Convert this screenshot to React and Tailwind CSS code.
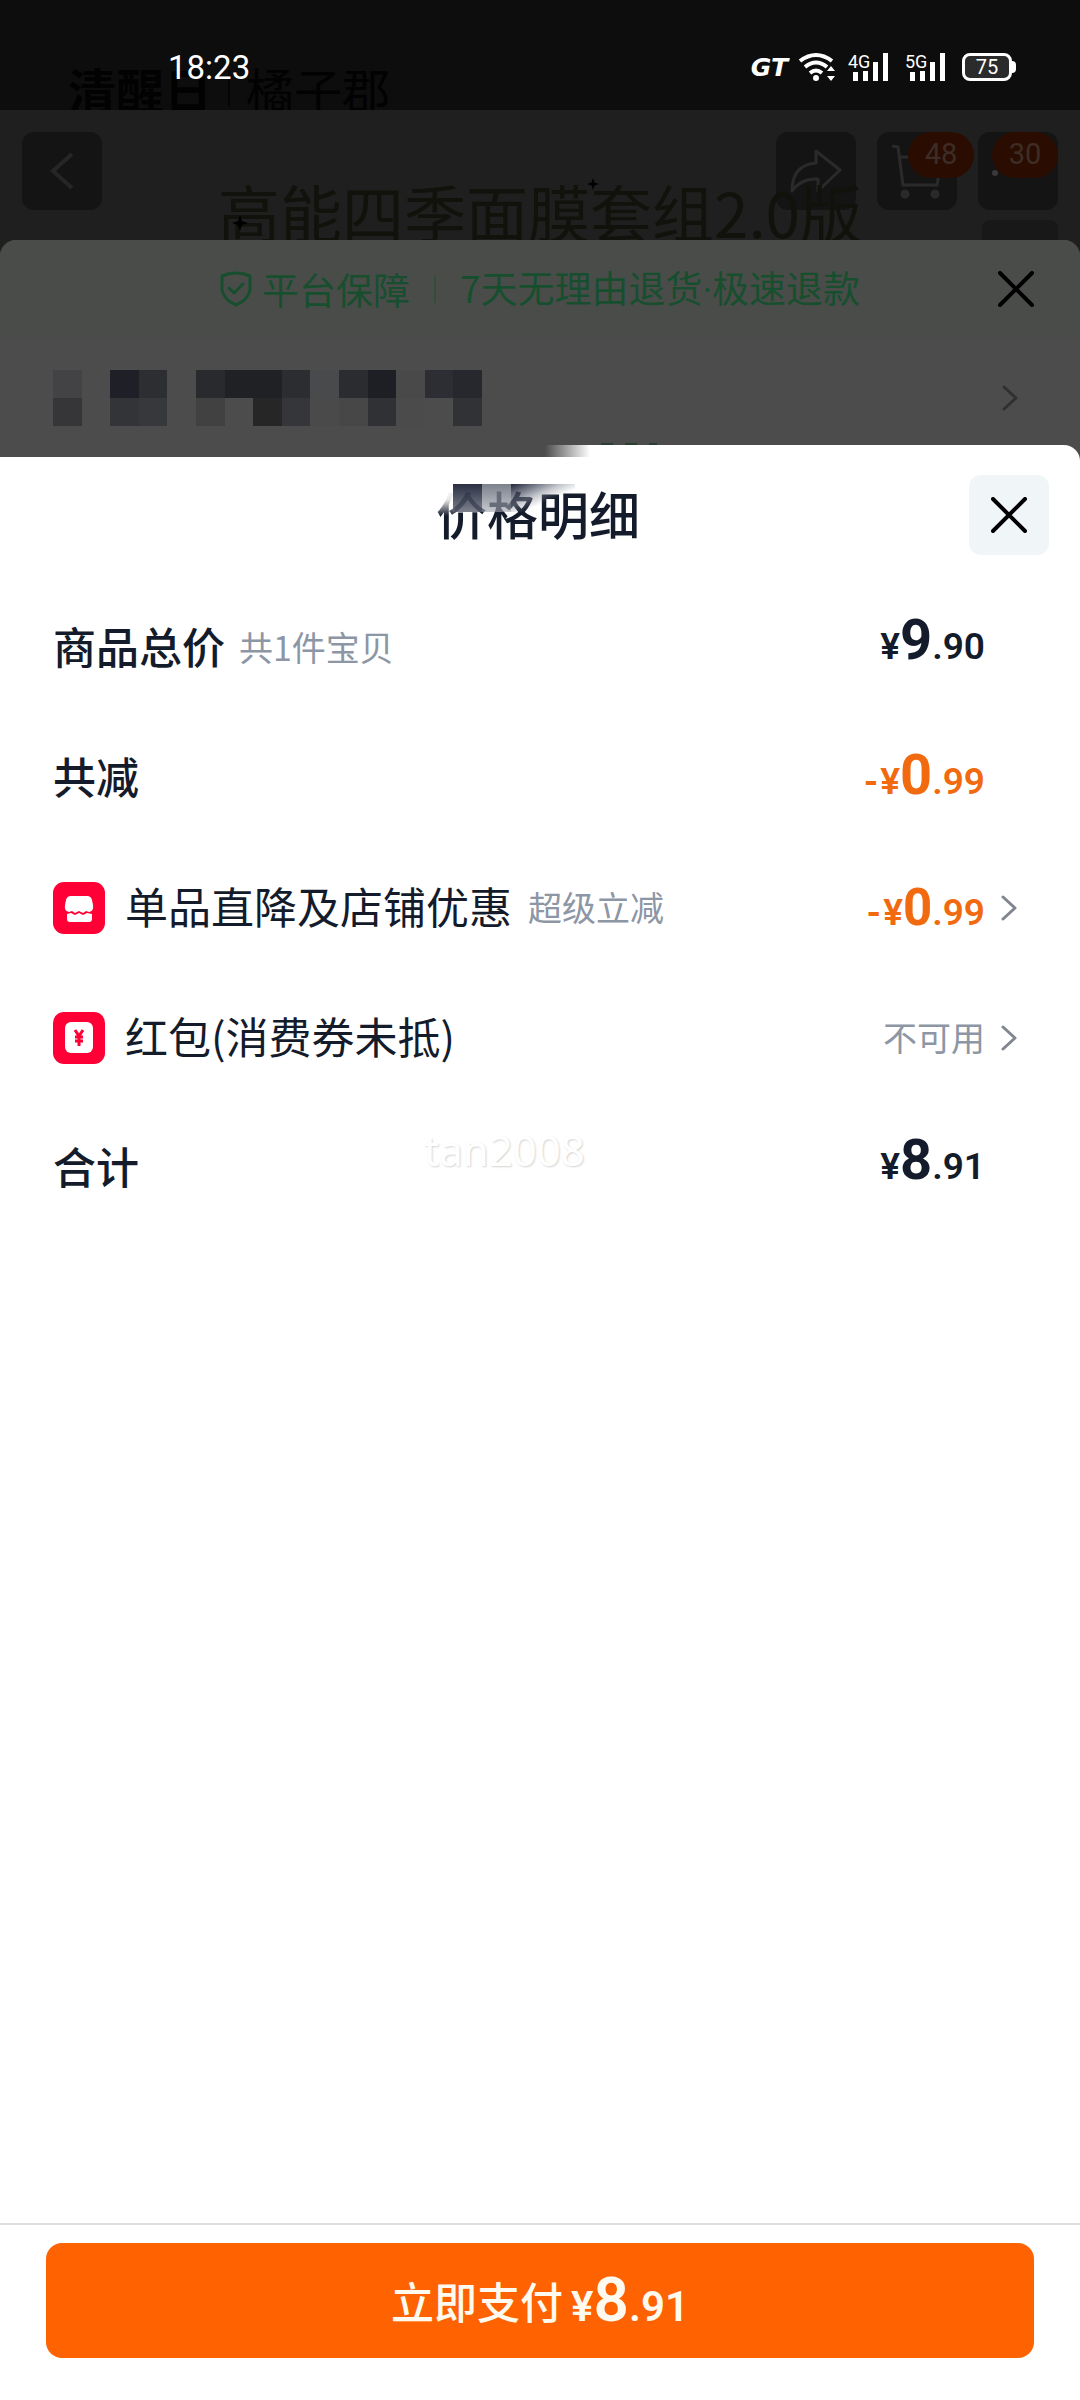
import React from "react";

const MOSAIC = [
  "bg-[#434345]", "", "bg-[#1f2027]", "bg-[#2d2e32]", "", "bg-[#292a2e]", "bg-[#202125]", "bg-[#202125]", "bg-[#2b2d31]", "bg-[#494a4c]", "bg-[#2b2c30]", "bg-[#1e1f24]", "bg-[#494949]", "bg-[#2d2e33]", "bg-[#27282d]",
  "bg-[#363638]", "", "bg-[#323437]", "bg-[#36383b]", "", "bg-[#414141]", "", "bg-[#262627]", "bg-[#34363a]", "bg-[#4a4a4a]", "bg-[#474748]", "bg-[#303135]", "bg-[#4b4b4b]", "", "bg-[#313236]",
];

function Cross({ className }) {
  return (
    <svg viewBox="0 0 36 36" className={className} fill="none" stroke="currentColor" strokeWidth="4" strokeLinecap="round" aria-hidden="true">
      <path d="M2 2 34 34M34 2 2 34" />
    </svg>
  );
}

function Chevron({ className }) {
  return (
    <svg viewBox="0 0 16 26" className={className} fill="none" stroke="currentColor" strokeWidth="3" strokeLinecap="round" strokeLinejoin="round" aria-hidden="true">
      <path d="M2 2 14 13 2 24" />
    </svg>
  );
}

function Signal({ label }) {
  return (
    <div className="relative h-7 w-[41px]">
      <span className="absolute top-0 left-0 font-[Roboto] text-[18px] leading-none">{label}</span>
      <svg viewBox="0 0 36 28" className="absolute right-0 bottom-0 h-7 w-9" fill="currentColor" aria-hidden="true">
        <rect x="0" y="19" width="5" height="9" />
        <rect x="10" y="18" width="5" height="10" />
        <rect x="20" y="9" width="5" height="19" />
        <rect x="30" y="0" width="5" height="28" />
      </svg>
    </div>
  );
}

function StatusBar() {
  return (
    <header className="relative flex h-[110px] items-center justify-between overflow-hidden bg-[#0d0d0d] pr-16 pl-[168px] text-white">
      <div aria-hidden="true" className="absolute top-[64px] left-[68px] flex items-center gap-4 text-[48px] leading-none whitespace-nowrap text-[#020202]">
        <span className="font-bold">清醒日</span>
        <span className="h-9 w-0.5 bg-[#050505]" />
        <span>橘子郡</span>
      </div>
      <time className="relative mt-6 font-[Roboto] text-[33px] leading-none">18:23</time>
      <div className="relative mt-6 flex items-center">
        <span className="mr-2.5 font-['DejaVu_Sans'] text-[25px] leading-none font-bold italic">GT</span>
        <svg viewBox="0 0 38 30" className="mr-3 h-[30px] w-[38px]" fill="none" stroke="currentColor" strokeWidth="4" aria-hidden="true">
          <path d="M2 9Q18-3 34 9" />
          <path d="M7 15Q18 6 29 15" />
          <path d="M12 21Q18 16 24 21" />
          <circle cx="18" cy="26" r="3" fill="currentColor" stroke="none" />
          <path d="M33 14 37 19H29ZM33 29 37 24H29Z" fill="currentColor" stroke="none" />
        </svg>
        <div className="flex gap-4">
          <Signal label="4G" />
          <Signal label="5G" />
        </div>
        <div className="ml-4 flex h-7 w-[50px] items-center justify-center rounded-lg border-[3px] border-white bg-[#2b2b2b] font-[Roboto] text-[20px] leading-none">75</div>
        <span className="h-3 w-1 rounded-r bg-white" />
      </div>
    </header>
  );
}

function NavBar() {
  return (
    <nav className="relative flex h-[130px] items-start justify-between overflow-hidden bg-[#1f1f1f] px-[22px] pt-[22px]">
      <button aria-label="返回" className="flex h-[78px] w-20 items-center justify-center rounded-xl bg-[#141414] text-[#262626]">
        <svg viewBox="0 0 24 38" className="h-[38px] w-6" fill="none" stroke="currentColor" strokeWidth="4" aria-hidden="true">
          <path d="M22 2 3 19 22 36" />
        </svg>
      </button>
      <div className="flex gap-[21px]">
        <button aria-label="分享" className="flex h-[78px] w-20 items-center justify-center rounded-xl bg-[#141414] text-[#2a2a2a]">
          <svg viewBox="0 0 52 44" className="h-11 w-[52px]" fill="none" stroke="currentColor" strokeWidth="3" strokeLinejoin="round" aria-hidden="true">
            <path d="M26 2 50 21 28 42V30Q11 29 2 42Q2 16 26 14Z" />
          </svg>
        </button>
        <button aria-label="购物车 48" className="relative flex h-[78px] w-20 items-center justify-center rounded-xl bg-[#141414] text-[#2a2a2a]">
          <svg viewBox="0 0 52 56" className="h-14 w-[52px]" fill="none" stroke="currentColor" strokeWidth="3" aria-hidden="true">
            <path d="M1 3 7 4 12 42H46L51 14H9" />
            <circle cx="14" cy="51" r="3" fill="currentColor" />
            <circle cx="44" cy="51" r="3" fill="currentColor" />
          </svg>
          <span className="absolute top-0 left-[31px] flex h-[46px] w-[66px] items-center justify-center rounded-full bg-[#2a0c00] font-[Roboto] text-[29px] text-[#3d2d26]">48</span>
        </button>
        <button aria-label="更多 30" className="relative h-[78px] w-20 rounded-xl bg-[#141414]">
          <span className="absolute top-[38px] left-3.5 h-1.5 w-1.5 rounded-full bg-[#3a3a3a]" />
          <span className="absolute top-0 right-0 flex h-[46px] w-[66px] items-center justify-center rounded-full bg-[#2a0c00] font-[Roboto] text-[29px] text-[#3d2d26]">30</span>
        </button>
      </div>
      <span aria-hidden="true" className="absolute top-[110px] right-[22px] h-16 w-[76px] rounded-lg bg-[#181818]" />
      <div aria-hidden="true" className="absolute inset-x-0 top-[70px] text-center text-[62px] leading-none whitespace-nowrap text-[#11120b]">高能四季面膜套组2.0版</div>
      <svg aria-hidden="true" viewBox="0 0 16 16" className="absolute top-[105px] left-[232px] h-4 w-4 fill-black"><path d="M8 0 10 6 16 8 10 10 8 16 6 10 0 8 6 6Z" /></svg>
      <svg aria-hidden="true" viewBox="0 0 16 16" className="absolute top-[68px] left-[587px] h-3 w-3 fill-black"><path d="M8 0 10 6 16 8 10 10 8 16 6 10 0 8 6 6Z" /></svg>
    </nav>
  );
}

function OrderSheet() {
  return (
    <div className="bg-[#1f1f1f]">
      <section className="relative overflow-hidden rounded-t-2xl bg-[#4c4c4c]">
        <div className="flex h-[98px] items-center justify-center bg-[#4a4c4a] text-[37px] leading-none text-[#174f2e]">
          <svg viewBox="0 0 32 36" className="mr-2.5 h-9 w-8" fill="none" stroke="currentColor" strokeWidth="3" strokeLinecap="round" strokeLinejoin="round" aria-hidden="true">
            <path d="M2 5Q16-1 30 5V19Q28 29 16 34Q4 29 2 19Z" />
            <path d="M9 17 14 22 23 13" />
          </svg>
          <span>平台保障</span>
          <span className="mx-6 h-7 w-0.5 bg-[#2f4f3b]" />
          <span>7天无理由退货<span className="font-[Roboto]">·</span>极速退款</span>
        </div>
        <button aria-label="关闭订单" className="absolute top-[31px] right-[46px] text-black">
          <Cross className="h-9 w-9" />
        </button>
        <div className="flex h-[107px] items-center justify-between pt-3 pr-[62px] pl-[53px]">
          <div aria-hidden="true" className="grid w-[429px] grid-cols-[repeat(15,1fr)]">
            {MOSAIC.map((tone, i) => (
              <span key={i} className={`h-7 ${tone}`} />
            ))}
          </div>
          <Chevron className="h-7 w-4 text-[#303033]" />
        </div>
        <div aria-hidden="true" className="absolute bottom-0 left-[601px] flex gap-3">
          <span className="h-0.5 w-3 bg-[#27402f]" />
          <span className="h-0.5 w-3 bg-[#27402f]" />
          <span className="h-0.5 w-2 bg-[#27402f]" />
        </div>
      </section>
    </div>
  );
}

function Price({ whole, cents, minus, size = "text-[56px]" }) {
  return (
    <span className="flex items-baseline font-[Roboto] text-[37px] leading-none font-bold">
      {minus && <span className="mr-0.5">-</span>}
      <span className="font-semibold">¥</span>
      <span className={size}>{whole}</span>
      <span className="font-semibold">.{cents}</span>
    </span>
  );
}

function StoreIcon() {
  return (
    <svg viewBox="0 0 52 52" className="mr-5 h-[52px] w-[52px] shrink-0" aria-hidden="true">
      <rect width="52" height="52" rx="11" fill="#fe0036" />
      <path d="M18 14H34Q38 14 39 18L40 23Q41 29 36 30L33 29 30 31 26 29 22 31 19 29 16 30Q11 29 12 23L13 18Q14 14 18 14Z" fill="#fff" />
      <path d="M14 32 18 31 22 33 26 31 30 33 34 31 39 32V37Q39 40 36 40H17Q14 40 14 37Z" fill="#fff" />
    </svg>
  );
}

function PacketIcon() {
  return (
    <svg viewBox="0 0 52 52" className="mr-5 h-[52px] w-[52px] shrink-0" aria-hidden="true">
      <rect width="52" height="52" rx="11" fill="#fe0036" />
      <rect x="12" y="10" width="28" height="31" rx="6" fill="#fff" />
      <path d="M22 18 26 24 30 18M26 24V34M22 25H30M22 29H30" fill="none" stroke="#fe0036" strokeWidth="3" />
    </svg>
  );
}

const rowClass = "flex h-[130px] w-full items-center pr-[63px] pl-[53px] text-left";
const labelClass = "pb-1.5 text-[43px] leading-none";
const noteClass = "pb-0.5 text-[34px] leading-none text-[#8d96a5]";

export default function App() {
  return (
    <div className="flex min-h-screen flex-col bg-white font-['Noto_Sans_CJK_SC',sans-serif] text-[#141b2b]">
      <StatusBar />
      <NavBar />
      <OrderSheet />
      <main className="flex flex-1 flex-col bg-[#4c4c4c]">
        <div className="relative flex flex-1 flex-col rounded-tr-2xl bg-white">
          <div aria-hidden="true" className="absolute top-0 left-0 h-3 w-[590px] bg-[linear-gradient(to_right,#4c4c4c_0,#4c4c4c_545px,#ffffff_590px)]" />
          <div className="relative flex h-[138px] items-center justify-center">
            <h1 className="relative pr-1 pb-0.5 text-[51px] leading-none font-medium">
              价格明细
              <span aria-hidden="true" className="absolute -top-1 left-0 h-8 w-[19px] bg-linear-to-b from-white via-white/90 to-white/0" />
              <span aria-hidden="true" className="absolute -top-1 left-[17px] flex">
                <span className="h-7 w-[29px] bg-linear-to-b from-[#2a3042] to-[#5c6271]/80" />
                <span className="h-7 w-[29px] bg-linear-to-b from-[#6d7380]/90 to-[#a0a4ad]/60" />
                <span className="h-7 w-[64px] bg-linear-to-br from-[#20273a] via-[#8a8f9b]/50 via-40% to-white/0 to-60%" />
              </span>
            </h1>
            <button aria-label="关闭" className="absolute top-[30px] right-[31px] flex h-20 w-20 items-center justify-center rounded-xl bg-[#f0f5f8] text-black">
              <Cross className="h-9 w-9" />
            </button>
          </div>

          <div className={rowClass}>
            <span className={`${labelClass} font-medium`}>商品总价</span>
            <span className={`ml-3.5 ${noteClass}`}>共1件宝贝</span>
            <span className="mr-8 ml-auto pb-4"><Price whole="9" cents="90" /></span>
          </div>
          <div className={rowClass}>
            <span className={`${labelClass} font-medium`}>共减</span>
            <span className="mr-8 ml-auto pb-1.5 text-[#f26a10]"><Price minus whole="0" cents="99" /></span>
          </div>
          <button className={rowClass}>
            <StoreIcon />
            <span className={labelClass}>单品直降及店铺优惠</span>
            <span className={`ml-4 ${noteClass}`}>超级立减</span>
            <span className="mr-4 ml-auto pb-0.5 text-[#f26a10]"><Price minus whole="0" cents="99" size="text-[51px]" /></span>
            <Chevron className="h-[26px] w-4 text-[#80858f]" />
          </button>
          <button className={rowClass}>
            <PacketIcon />
            <span className={labelClass}>红包(消费券未抵)</span>
            <span className={`mr-4 ml-auto ${noteClass}`}>不可用</span>
            <Chevron className="h-[26px] w-4 text-[#80858f]" />
          </button>
          <div className={`relative ${rowClass}`}>
            <span className={`${labelClass} font-medium`}>合计</span>
            <span className="absolute top-[26px] left-[424px] font-['Noto_Sans'] text-[42px] leading-none text-white [text-shadow:1px_1px_2px_#d4d4d4]">tan2008</span>
            <span className="mr-8 ml-auto pb-4"><Price whole="8" cents="91" /></span>
          </div>

          <footer className="mt-auto border-t-2 border-[#dddddd] px-[46px] pt-[18px] pb-[42px]">
            <button className="flex h-[115px] w-full items-center justify-center rounded-2xl bg-[#ff6200] text-[#fffaf0]">
              <span className="mr-2 text-[43px] leading-none font-medium">立即支付</span>
              <span className="flex items-baseline pb-0.5 font-[Roboto] text-[42px] leading-none font-semibold">
                ¥<span className="text-[62px]">8</span>.91
              </span>
            </button>
          </footer>
        </div>
      </main>
    </div>
  );
}
